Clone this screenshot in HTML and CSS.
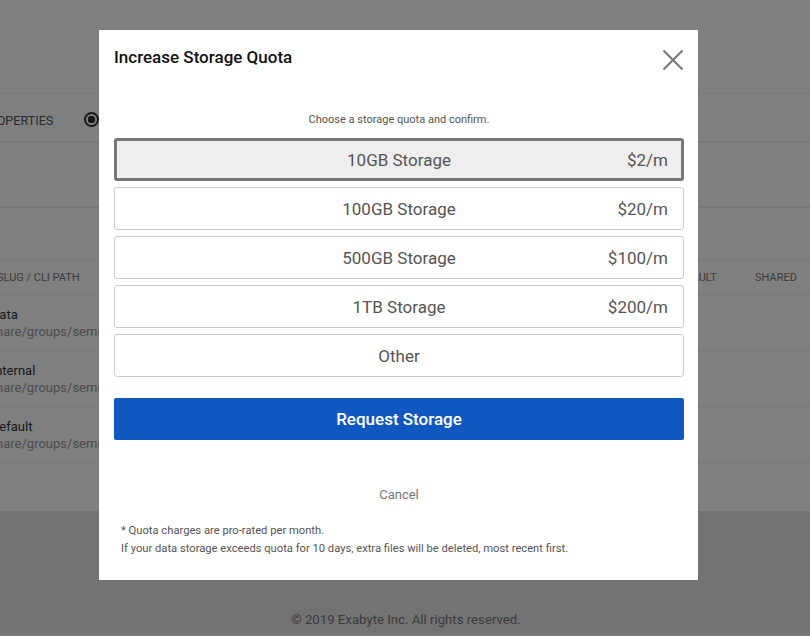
FILE: index.html
```html
<!DOCTYPE html>
<html>
<head>
<meta charset="utf-8">
<link rel="stylesheet" href="styles.css">
</head>
<body>
<div class="page">
  <header class="top"></header>
  <nav class="tabs">
    <span class="tab">Properties</span>
    <span class="radio"></span>
  </nav>
  <div class="band band-a"></div>
  <div class="band band-b"></div>
  <div class="thead">
    <span class="c-slug">Slug / CLI Path</span>
    <span class="c-default">Default</span>
    <span class="c-shared">Shared</span>
  </div>
  <div class="trow"><div class="c-slug"><div class="name">data</div><div class="path">/share/groups/seminar</div></div></div>
  <div class="trow"><div class="c-slug"><div class="name">internal</div><div class="path">/share/groups/seminar</div></div></div>
  <div class="trow"><div class="c-slug"><div class="name">default</div><div class="path">/share/groups/seminar</div></div></div>
  <div class="after"></div>
  <footer class="foot">© 2019 Exabyte Inc. All rights reserved.</footer>
</div>

<div class="overlay">
  <div class="modal">
    <div class="m-head">
      <h2 class="m-title">Increase Storage Quota</h2>
      <button class="close" aria-label="Close">
        <svg width="22" height="22" viewBox="0 0 22 22"><path d="M1.5 1.5L20.5 20.5M20.5 1.5L1.5 20.5" stroke="#777" stroke-width="2" fill="none"/></svg>
      </button>
    </div>
    <p class="m-sub">Choose a storage quota and confirm.</p>
    <div class="options">
      <div class="opt selected"><span class="o-label">10GB Storage</span><span class="o-price">$2/m</span></div>
      <div class="opt"><span class="o-label">100GB Storage</span><span class="o-price">$20/m</span></div>
      <div class="opt"><span class="o-label">500GB Storage</span><span class="o-price">$100/m</span></div>
      <div class="opt"><span class="o-label">1TB Storage</span><span class="o-price">$200/m</span></div>
      <div class="opt"><span class="o-label">Other</span></div>
    </div>
    <button class="primary">Request Storage</button>
    <div class="cancel">Cancel</div>
    <div class="notes">
      <p>* Quota charges are pro-rated per month.</p>
      <p>If your data storage exceeds quota for 10 days, extra files will be deleted, most recent first.</p>
    </div>
  </div>
</div>
</body>
</html>
```

FILE: styles.css
```css
* { box-sizing: border-box; }
html, body { margin: 0; padding: 0; }
body {
  width: 810px;
  height: 636px;
  overflow: hidden;
  font-family: Roboto, "Liberation Sans", sans-serif;
  background: #fff;
}
.page { width: 810px; }
.top { height: 94px; background: #fff; border-bottom: 1px solid #eeeefc; }
.tabs {
  height: 49px;
  display: flex;
  align-items: center;
  border-bottom: 2px solid #ececec;
  padding-top: 6px;
}
.tab {
  text-transform: uppercase;
  font-size: 12.6px;
  color: #555;
  margin-left: -19px;
}
.radio {
  width: 15px; height: 15px;
  border: 2px solid #333;
  border-radius: 50%;
  margin-left: 31px;
  margin-top: -3px;
  background: radial-gradient(circle, #333 0 3.5px, transparent 4px);
}
.band-a { height: 65px; border-bottom: 2px solid #ececec; }
.band-b { height: 52px; border-bottom: 1px solid #eee; }
.thead {
  height: 35px;
  display: flex;
  align-items: center;
  border-bottom: 1px solid #eee;
  font-size: 11px;
  text-transform: uppercase;
  color: #777;
  position: relative;
}
.thead .c-slug { margin-left: -3px; }
.c-default { position: absolute; left: 673px; }
.c-shared { position: absolute; left: 755px; }
.trow {
  height: 56px;
  border-bottom: 1px solid #eee;
  display: flex;
  align-items: center;
}
.trow .c-slug { margin-left: -8px; }
.trow .name { font-size: 13px; color: #333; line-height: 17px; }
.trow .path { font-size: 13px; color: #999; line-height: 17px; margin-left: -8px; }
.after { height: 48px; background: #fff; }
.foot {
  height: 124px;
  background: #e6e6e6;
  text-align: center;
  font-size: 13.2px;
  color: #777;
  padding-top: 101px;
  padding-left: 2px;
}

.overlay {
  position: fixed;
  inset: 0;
  background: rgba(0, 0, 0, 0.5);
}
.modal {
  position: absolute;
  left: 99px;
  top: 30px;
  width: 599px;
  height: 550px;
  background: #fff;
  padding: 0 14px 0 15px;
}
.m-head {
  display: flex;
  justify-content: space-between;
  align-items: flex-start;
  height: 81px;
}
.m-title {
  margin: 17px 0 0;
  font-size: 17px;
  font-weight: 500;
  color: #111;
}
.close {
  margin: 19px 0 0 0;
  padding: 0;
  border: 0;
  background: none;
  width: 22px;
  height: 22px;
}
.close svg { display: block; }
.m-sub {
  margin: 0;
  text-align: center;
  font-size: 11px;
  color: #555;
  height: 27px;
  line-height: 17px;
}
.options { display: flex; flex-direction: column; gap: 6px; }
.opt {
  height: 43px;
  border: 1px solid #ccc;
  border-radius: 3px;
  display: flex;
  align-items: center;
  justify-content: center;
  position: relative;
  font-size: 17px;
  color: #555;
}
.opt.selected { border: 3px solid #777; background: #eee; }
.o-price { position: absolute; right: 15px; }
.opt.selected .o-price { right: 13px; }
.primary {
  display: block;
  width: 100%;
  height: 42px;
  margin-top: 21px;
  border: 0;
  border-radius: 2px;
  background: #1157c0;
  color: #fff;
  font-family: Roboto, "Liberation Sans", sans-serif;
  font-size: 17px;
  font-weight: 500;
}
.cancel {
  margin-top: 47px;
  text-align: center;
  font-size: 13px;
  color: #777;
  line-height: 16px;
}
.notes { margin-top: 19px; padding-left: 7px; }
.notes p { margin: 0; font-size: 11.2px; color: #555; line-height: 18px; }
```
